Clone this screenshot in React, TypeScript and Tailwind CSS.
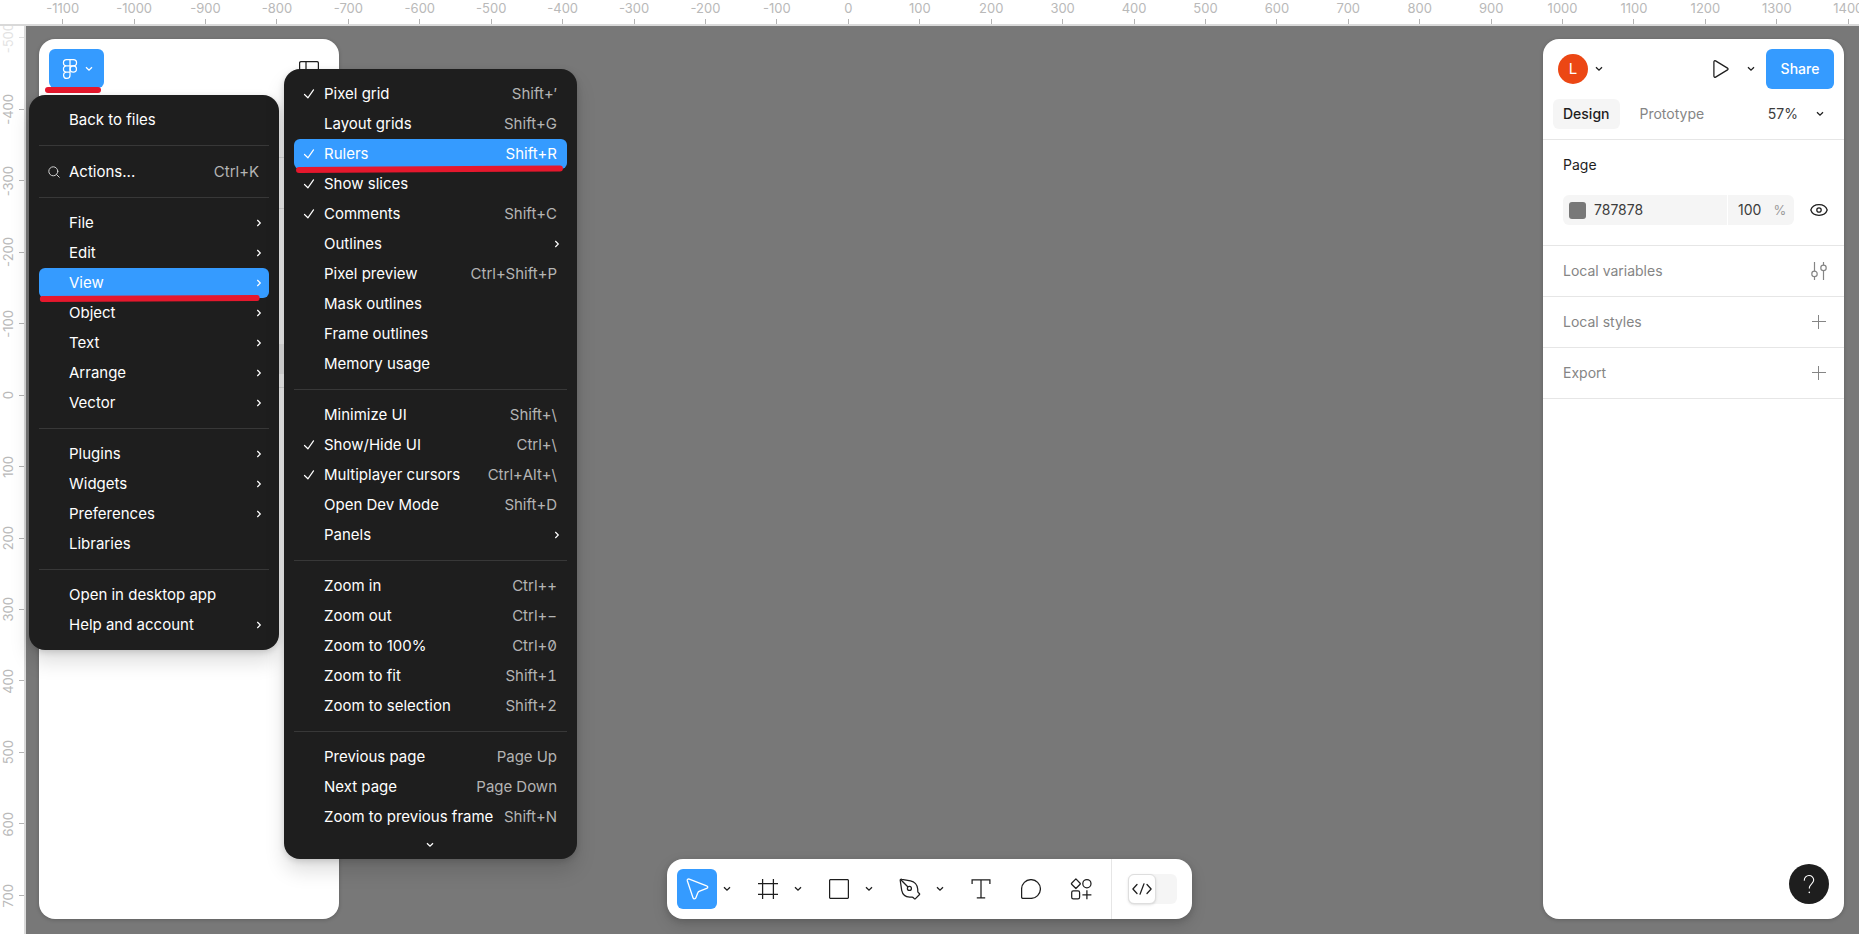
import React, { useState } from 'react';
import clsx from 'clsx';

interface IconProps {
  className?: string;
}

interface MenuEntry {
  label: string;
  shortcut?: string;
  submenu?: boolean;
  checked?: boolean;
  search?: boolean;
}

const mainMenu: MenuEntry[][] = [
  [{ label: 'Back to files' }],
  [{ label: 'Actions...', shortcut: 'Ctrl+K', search: true }],
  [
    { label: 'File', submenu: true },
    { label: 'Edit', submenu: true },
    { label: 'View', submenu: true },
    { label: 'Object', submenu: true },
    { label: 'Text', submenu: true },
    { label: 'Arrange', submenu: true },
    { label: 'Vector', submenu: true },
  ],
  [
    { label: 'Plugins', submenu: true },
    { label: 'Widgets', submenu: true },
    { label: 'Preferences', submenu: true },
    { label: 'Libraries' },
  ],
  [{ label: 'Open in desktop app' }, { label: 'Help and account', submenu: true }],
];

const viewMenu: MenuEntry[][] = [
  [
    { label: 'Pixel grid', shortcut: 'Shift+′', checked: true },
    { label: 'Layout grids', shortcut: 'Shift+G' },
    { label: 'Rulers', shortcut: 'Shift+R', checked: true },
    { label: 'Show slices', checked: true },
    { label: 'Comments', shortcut: 'Shift+C', checked: true },
    { label: 'Outlines', submenu: true },
    { label: 'Pixel preview', shortcut: 'Ctrl+Shift+P' },
    { label: 'Mask outlines' },
    { label: 'Frame outlines' },
    { label: 'Memory usage' },
  ],
  [
    { label: 'Minimize UI', shortcut: 'Shift+\\' },
    { label: 'Show/Hide UI', shortcut: 'Ctrl+\\', checked: true },
    { label: 'Multiplayer cursors', shortcut: 'Ctrl+Alt+\\', checked: true },
    { label: 'Open Dev Mode', shortcut: 'Shift+D' },
    { label: 'Panels', submenu: true },
  ],
  [
    { label: 'Zoom in', shortcut: 'Ctrl++' },
    { label: 'Zoom out', shortcut: 'Ctrl+−' },
    { label: 'Zoom to 100%', shortcut: 'Ctrl+0' },
    { label: 'Zoom to fit', shortcut: 'Shift+1' },
    { label: 'Zoom to selection', shortcut: 'Shift+2' },
  ],
  [
    { label: 'Previous page', shortcut: 'Page Up' },
    { label: 'Next page', shortcut: 'Page Down' },
    { label: 'Zoom to previous frame', shortcut: 'Shift+N' },
  ],
];

const horizontalTicks = Array.from({ length: 26 }, (_, i) => -1100 + i * 100);
const verticalTicks = Array.from({ length: 13 }, (_, i) => -500 + i * 100);

function ChevronDown({ className }: IconProps) {
  return (
    <svg viewBox="0 0 8 6" className={clsx('h-[6px] w-[8px]', className)} fill="none" stroke="currentColor" strokeWidth="1.3">
      <path d="M1 1.2 4 4.2 7 1.2" />
    </svg>
  );
}

function ChevronRight() {
  return (
    <svg viewBox="0 0 6 8" className="h-[8px] w-[6px]" fill="none" stroke="currentColor" strokeWidth="1.2">
      <path d="M1.3 1 4.3 4 1.3 7" />
    </svg>
  );
}

function CheckIcon() {
  return (
    <svg viewBox="0 0 12 12" className="size-3" fill="none" stroke="currentColor" strokeWidth="1.2" strokeLinecap="round" strokeLinejoin="round">
      <path d="M1.5 6.5 4.9 9.8 10.5 1.8" />
    </svg>
  );
}

function SearchIcon() {
  return (
    <svg viewBox="0 0 12 12" className="size-3 text-[#d0d0d0]" fill="none" stroke="currentColor" strokeWidth="1" strokeLinecap="round">
      <circle cx="5.3" cy="5.3" r="4.5" />
      <path d="m8.6 8.6 2.7 2.7" />
    </svg>
  );
}

function FigmaIcon() {
  return (
    <svg viewBox="0 0 16 22" className="h-[22px] w-[16px]" fill="none" stroke="currentColor" strokeWidth="1.25">
      <path d="M8 1.5H4.6a3.1 3.1 0 0 0 0 6.3H8zM8 1.5h3.4a3.1 3.1 0 0 1 0 6.3H8zM8 7.8H4.6a3.1 3.1 0 0 0 0 6.3H8zM8 14.1H4.6A3.2 3.2 0 1 0 8 17.3z" />
      <circle cx="11.3" cy="10.9" r="3.15" />
    </svg>
  );
}

function PanelIcon() {
  return (
    <svg viewBox="0 0 20 16" className="h-[16px] w-[20px]" fill="none" stroke="currentColor" strokeWidth="1.25">
      <rect x="0.6" y="0.6" width="18.8" height="14.8" rx="1.5" />
      <path d="M7 .6v14.8" />
    </svg>
  );
}

function PlayIcon() {
  return (
    <svg viewBox="0 0 16 18" className="h-[18px] w-[16px]" fill="none" stroke="currentColor" strokeWidth="1.25" strokeLinejoin="round">
      <path d="M.9 1.9v14.2c0 1 .9 1.5 1.7 1l11.9-7.2c.8-.5.8-1.3 0-1.8L2.6.9C1.8.4.9.9.9 1.9Z" />
    </svg>
  );
}

function EyeIcon() {
  return (
    <svg viewBox="0 0 18 12" className="h-[12px] w-[18px]" fill="none" stroke="currentColor" strokeWidth="1.25">
      <path d="M.8 6C1.9 2.6 5.2.7 9 .7S16.1 2.6 17.2 6C16.1 9.4 12.8 11.3 9 11.3S1.9 9.4.8 6Z" />
      <circle cx="9" cy="6" r="2.2" />
    </svg>
  );
}

function VariablesIcon() {
  return (
    <svg viewBox="0 0 16 18" className="h-[18px] w-[16px]" fill="none" stroke="currentColor" strokeWidth="1.2">
      <path d="M3.5 0v9.2M3.5 14.6V18M12.5 0v3.2M12.5 8.6V18" />
      <circle cx="3.5" cy="11.9" r="2.7" />
      <circle cx="12.5" cy="5.9" r="2.7" />
    </svg>
  );
}

function PlusIcon() {
  return (
    <svg viewBox="0 0 14 14" className="size-[14px]" fill="none" stroke="currentColor" strokeWidth="1">
      <path d="M6.5 0v14M0 6.5h14" />
    </svg>
  );
}

function MoveIcon() {
  return (
    <svg viewBox="0 0 24 24" className="size-6" fill="none" stroke="currentColor" strokeWidth="1.3" strokeLinejoin="round">
      <path d="M2.3 3.7 8 20.7c.5 1.5 2.4 1.5 2.9.1l1.9-5c.2-.6.7-1.1 1.3-1.4l7.6-3c1.5-.6 1.4-2-.1-2.5L4.3 2.1c-1.3-.4-2.4.3-2 1.6Z" />
    </svg>
  );
}

function FrameIcon() {
  return (
    <svg viewBox="0 0 20 20" className="size-5" fill="none" stroke="currentColor" strokeWidth="1.25">
      <path d="M4.6 0v20M15.4 0v20M0 4.6h20M0 15.4h20" />
    </svg>
  );
}

function RectangleIcon() {
  return (
    <svg viewBox="0 0 20 20" className="size-5" fill="none" stroke="currentColor" strokeWidth="1.25">
      <rect x=".6" y=".6" width="18.8" height="18.8" rx="1" />
    </svg>
  );
}

function PenIcon() {
  return (
    <svg viewBox="0 0 22 22" className="size-[22px]" fill="none" stroke="currentColor" strokeWidth="1.25" strokeLinejoin="round">
      <path d="M1.3 2.8C1 1.7 1.7 1 2.8 1.3l8.7 1.5c4 .8 6.9 4.3 7.2 8.2l.1 2.4c0 .5.2.9.6 1.2l.9.9c.4.4.4.9 0 1.3l-3.800 3.800c-.4.4-.9.4-1.3 0l-.8-.8c-.3-.4-.8-.6-1.3-.6h-2.4c-4-.3-7.200-3-8-6.900Z" />
      <path d="m1.800 1.800 7.200 7.200" />
      <circle cx="10.400" cy="10.400" r="2" />
    </svg>
  );
}

function TextIcon() {
  return (
    <svg viewBox="0 0 20 20" className="size-5" fill="none" stroke="currentColor" strokeWidth="1.25">
      <path d="M1.100 5V.9h17.800V5M10 .9v18M5.800 18.900h8.400" />
    </svg>
  );
}

function CommentIcon() {
  return (
    <svg viewBox="0 0 20 20" className="size-5" fill="none" stroke="currentColor" strokeWidth="1.25">
      <path d="M10 .6a9.400 9.400 0 1 1 0 18.800H1.900c-.8 0-1.300-.5-1.300-1.300V10A9.400 9.400 0 0 1 10 .6Z" />
    </svg>
  );
}

function ActionsIcon() {
  return (
    <svg viewBox="0 0 22 22" className="size-[22px]" fill="none" stroke="currentColor" strokeWidth="1.25">
      <path d="m5.900.9 4.200 4.300c.3.300.3.700 0 1L5.900 10.500 1.600 6.200c-.3-.3-.3-.7 0-1Z" strokeLinejoin="round" />
      <circle cx="16.900" cy="5.700" r="4.100" />
      <rect x="1.700" y="12.900" width="7.900" height="7.900" rx="1.600" />
      <path d="M16.900 12.300v9M12.400 16.800h9" />
    </svg>
  );
}

function CodeIcon() {
  return (
    <svg viewBox="0 0 20 12" className="h-[12px] w-[20px]" fill="none" stroke="currentColor" strokeWidth="1.25" strokeLinecap="round" strokeLinejoin="round">
      <path d="M5 1.500.9 6 5 10.500M15 1.500 19.100 6 15 10.500M12 .8 8 11.200" />
    </svg>
  );
}

function HelpIcon() {
  return (
    <svg viewBox="0 0 12 20" className="h-[20px] w-[12px]" fill="none" stroke="currentColor" strokeWidth="1.1" strokeLinecap="round">
      <path d="M1.300 6.200A4.700 4.700 0 0 1 6 1.500a4.600 4.600 0 0 1 4.700 4.600c0 3.600-4.400 3.900-4.400 8" />
      <path d="M6.300 18.200v.2" strokeWidth="1.5" />
    </svg>
  );
}

function Menu({ name, groups, active, children, className }: {
  name: string;
  groups: MenuEntry[][];
  active: string;
  children?: React.ReactNode;
  className?: string;
}) {
  return (
    <nav
      aria-label={name}
      className={clsx(
        'absolute rounded-2xl bg-[#1e1e1e] p-[10px] text-[15px] text-white shadow-[0_2px_6px_rgba(0,0,0,0.15),0_12px_20px_rgba(0,0,0,0.13)]',
        className,
      )}
    >
      {groups.map((group, i) => (
        <ul key={i} className={clsx(i > 0 && 'mt-[10px] border-t border-[#383838] pt-[10px]')}>
          {group.map((entry) => (
            <li key={entry.label} className="relative">
              <button
                type="button"
                className={clsx(
                  'flex w-full items-center rounded-md pr-[10px] pl-2',
                  entry.search ? 'h-[31px]' : 'h-[30px]',
                  entry.label === active && 'bg-[#359bff]',
                )}
              >
                <span className="flex w-[22px] shrink-0 items-center pl-px">
                  {entry.checked && <CheckIcon />}
                  {entry.search && <SearchIcon />}
                </span>
                <span className="flex-1 text-left whitespace-nowrap">{entry.label}</span>
                {entry.shortcut && (
                  <span className={clsx('whitespace-nowrap slashed-zero tabular-nums', entry.label === active ? 'text-white' : 'text-[#b4b4b4]')}>
                    {entry.shortcut}
                  </span>
                )}
                {entry.submenu && <span className="-mr-[3px]"><ChevronRight /></span>}
              </button>
              {/* Hand-drawn marker under the highlighted row */}
              {entry.label === active && (
                <svg className="absolute inset-x-0 top-[26px] h-2 w-full" viewBox="0 0 270 8" preserveAspectRatio="none">
                  <path d={entry.submenu ? 'M4 5 256 4' : 'M5 5 263 3.5'} stroke="#e5182d" strokeWidth="6" strokeLinecap="round" />
                </svg>
              )}
            </li>
          ))}
        </ul>
      ))}
      {children}
    </nav>
  );
}

function Tool({ label, menu, selected, children }: {
  label: string;
  menu?: boolean;
  selected?: boolean;
  children: React.ReactNode;
}) {
  return (
    <div className="flex items-center">
      <button
        type="button"
        aria-label={label}
        className={clsx('flex size-10 items-center justify-center rounded-md', selected && 'bg-[#359bff] text-white')}
      >
        {children}
      </button>
      {menu && (
        <button type="button" aria-label={`${label} options`} className="flex h-10 w-[21px] items-center justify-center">
          <ChevronDown />
        </button>
      )}
    </div>
  );
}

function PanelRow({ title, icon }: { title: string; icon: React.ReactNode }) {
  return (
    <section className="flex h-[51px] items-center justify-between border-b border-[#e6e6e6] pr-[15px] pl-5 text-[#858585]">
      <h2>{title}</h2>
      <button type="button" aria-label={title} className="flex w-5 justify-center">{icon}</button>
    </section>
  );
}

export default function App() {
  const [color, setColor] = useState('787878');
  const [opacity, setOpacity] = useState('100');

  return (
    <div className="relative flex h-screen flex-col overflow-hidden bg-[#787878] font-['Inter',sans-serif] text-sm text-[#1e1e1e]">
      {/* Top ruler */}
      <div className="flex h-[26px] shrink-0 overflow-hidden border-b-2 border-[#d9d9d9] bg-white text-[13px] text-[#b9b9b9]">
        <div className="w-[27px] shrink-0" />
        <div className="flex w-[1857px] shrink-0">
          {horizontalTicks.map((tick) => (
            <div key={tick} className="flex min-w-0 flex-1 flex-col items-center justify-between">
              <span className="leading-4">{tick}</span>
              <span className="h-[5px] w-px bg-[#b3b3b3]" />
            </div>
          ))}
        </div>
      </div>

      <div className="flex min-h-0 flex-1">
        {/* Left ruler */}
        <div className="w-[26px] shrink-0 overflow-hidden border-r-2 border-[#d9d9d9] bg-white text-[13px] text-[#b9b9b9]">
          <div className="-mt-6 flex h-[929px] flex-col">
            {verticalTicks.map((tick, i) => (
              <div key={tick} className={clsx('flex min-h-0 flex-1 items-center justify-between', i === 0 && 'opacity-40')}>
                <span className="rotate-180 leading-4 [writing-mode:vertical-rl]">{tick}</span>
                <span className="h-px w-[5px] bg-[#b3b3b3]" />
              </div>
            ))}
          </div>
        </div>

        <main className="flex min-w-0 flex-1 justify-between pt-[13px] pr-[15px] pb-[15px] pl-[13px]">
          {/* Left panel */}
          <aside className="w-[300px] overflow-hidden rounded-2xl bg-white shadow-[0_1px_4px_rgba(0,0,0,0.2)]">
            <header className="flex h-[119px] items-start justify-between border-b border-[#e6e6e6] pt-[10px] pr-5 pl-[10px]">
              <button type="button" aria-label="Main menu" className="flex h-[39px] w-[55px] items-center gap-[7px] rounded-md bg-[#359bff] pl-[13px] text-white">
                <FigmaIcon />
                <ChevronDown />
              </button>
              <button type="button" aria-label="Hide panel" className="mt-[12px]"><PanelIcon /></button>
            </header>
            <div className="h-[51px] border-b border-[#e6e6e6]" />
            <div className="h-[179px] border-b border-[#e6e6e6] px-[10px] pt-[135px]">
              <div className="h-[30px] rounded-md bg-[#f0f0f0]" />
            </div>
          </aside>

          {/* Right panel */}
          <aside className="flex w-[301px] flex-col rounded-2xl bg-white shadow-[0_1px_4px_rgba(0,0,0,0.2)]">
            <header className="border-b border-[#e6e6e6] p-[10px]">
              <div className="flex items-center">
                <button type="button" aria-label="Account" className="flex items-center gap-[7px] pl-[5px]">
                  <span className="flex size-[30px] items-center justify-center rounded-full bg-[#ec4714] text-[15px] text-white">L</span>
                  <ChevronDown />
                </button>
                <button type="button" aria-label="Present" className="ml-auto"><PlayIcon /></button>
                <button type="button" aria-label="Present options" className="mr-[10px] ml-[17px] px-px"><ChevronDown /></button>
                <button type="button" className="h-10 w-[68px] rounded-md bg-[#359bff] text-sm font-medium text-white">Share</button>
              </div>
              <div className="mt-[10px] flex h-[30px] items-center">
                <button type="button" className="h-[30px] rounded-md bg-[#f5f5f5] px-[10px] font-medium">Design</button>
                <button type="button" className="ml-[10px] px-[10px] text-[#858585]">Prototype</button>
                <button type="button" className="ml-auto flex items-center gap-[18px] pr-[10px] text-[#3c3c3c]">
                  57%
                  <ChevronDown className="text-[#1e1e1e]" />
                </button>
              </div>
            </header>

            <section className="border-b border-[#e6e6e6] pt-[14px] pr-[15px] pb-5 pl-5">
              <h2 className="leading-[22px]">Page</h2>
              <div className="mt-[19px] flex items-center justify-between">
                <div className="flex h-[30px] w-[231px] items-center rounded-md bg-[#f5f5f5] text-[#3c3c3c]">
                  <span className="ml-[6px] size-[17px] rounded-[3px] bg-[#787878]" />
                  <input
                    aria-label="Page color"
                    value={color}
                    onChange={(e) => setColor(e.target.value)}
                    className="ml-2 w-0 flex-1 bg-transparent outline-none"
                  />
                  <span className="h-full w-px bg-white" />
                  <input
                    aria-label="Opacity"
                    value={opacity}
                    onChange={(e) => setOpacity(e.target.value)}
                    className="ml-[10px] w-[28px] bg-transparent outline-none"
                  />
                  <span className="mr-1 ml-1 w-5 text-center text-[13px] text-[#9a9a9a]">%</span>
                </div>
                <button type="button" aria-label="Toggle visibility" className="flex w-5 justify-center"><EyeIcon /></button>
              </div>
            </section>

            <PanelRow title="Local variables" icon={<VariablesIcon />} />
            <PanelRow title="Local styles" icon={<PlusIcon />} />
            <PanelRow title="Export" icon={<PlusIcon />} />

            <button type="button" aria-label="Help" className="mt-auto mr-[15px] mb-[15px] flex size-10 items-center justify-center self-end rounded-full bg-[#1e1e1e] text-white">
              <HelpIcon />
            </button>
          </aside>
        </main>
      </div>

      {/* Toolbar */}
      <div className="pointer-events-none absolute inset-x-0 bottom-[15px] flex justify-center pr-px">
        <div className="pointer-events-auto flex h-[60px] items-center rounded-2xl bg-white pl-[10px] shadow-[0_2px_6px_rgba(0,0,0,0.15),0_6px_16px_rgba(0,0,0,0.12)]">
          <div className="flex gap-[10px]">
            <Tool label="Move" menu selected><MoveIcon /></Tool>
            <Tool label="Frame" menu><FrameIcon /></Tool>
            <Tool label="Rectangle" menu><RectangleIcon /></Tool>
            <Tool label="Pen" menu><PenIcon /></Tool>
            <Tool label="Text"><TextIcon /></Tool>
            <Tool label="Comment"><CommentIcon /></Tool>
            <Tool label="Actions"><ActionsIcon /></Tool>
          </div>
          <div className="ml-[10px] flex h-full items-center border-l border-[#e6e6e6] pr-[15px] pl-4">
            <button type="button" role="switch" aria-checked="false" aria-label="Dev Mode" className="flex h-[30px] w-[49px] rounded-md bg-[#f5f5f5]">
              <span className="flex h-[30px] w-[28px] items-center justify-center rounded-md border border-[#dedede] bg-white shadow-sm">
                <CodeIcon />
              </span>
            </button>
          </div>
        </div>
      </div>

      {/* Marker under the main menu button */}
      <span className="absolute top-[87px] left-[45px] h-[6px] w-[56px] rounded-full bg-[#e5182d]" />

      <Menu name="Main menu" groups={mainMenu} active="View" className="top-[95px] left-[29px] w-[250px]" />
      <Menu name="View" groups={viewMenu} active="Rulers" className="top-[69px] left-[284px] w-[293px]">
        <button type="button" aria-label="Scroll down" className="flex h-[17px] w-full items-end justify-center pr-[2px] pb-px">
          <ChevronDown />
        </button>
      </Menu>
    </div>
  );
}
